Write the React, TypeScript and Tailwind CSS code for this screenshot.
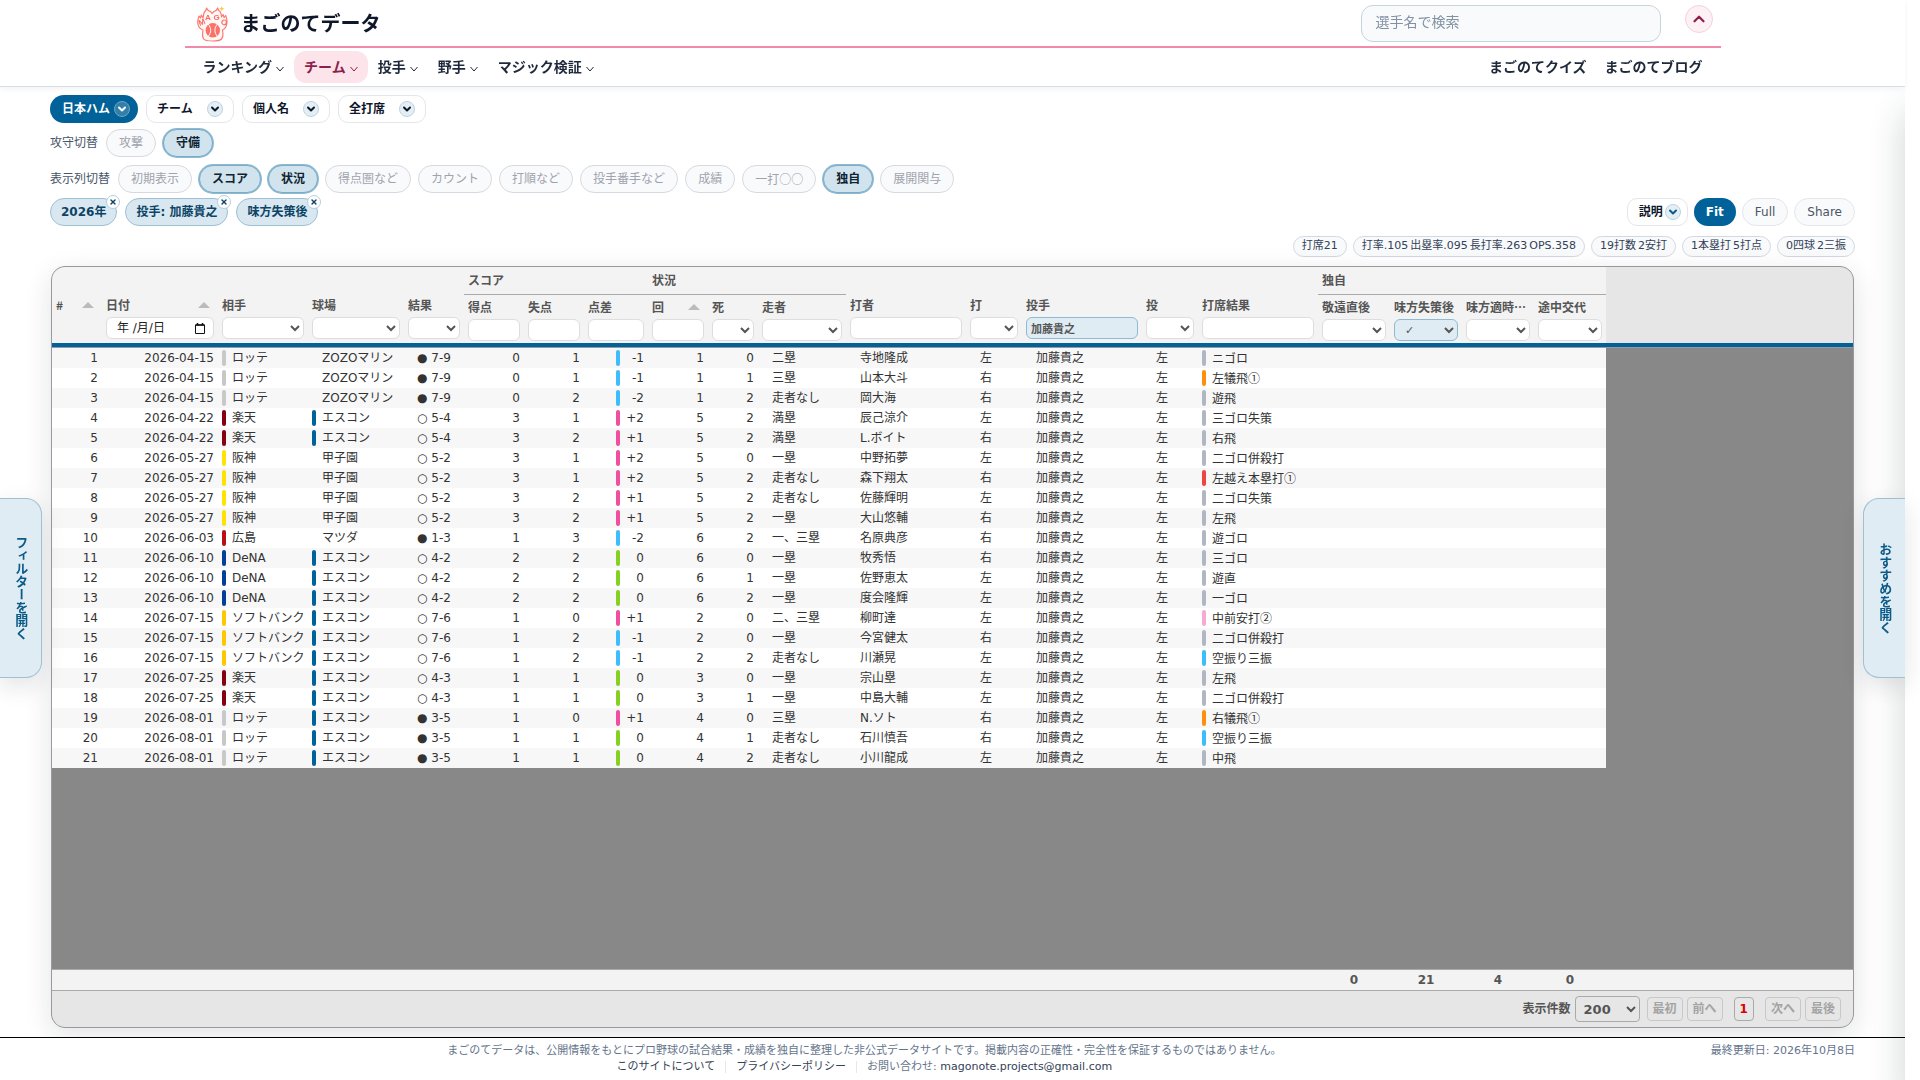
import type { ReactNode } from "react";
import { ChevronDown, ChevronUp, X } from "lucide-react";

interface AtBat {
  date: string;
  team: string;
  park: string;
  win: boolean;
  score: string;
  own: number;
  opp: number;
  inning: number;
  outs: number;
  runner: string;
  batter: string;
  bats: string;
  result: string;
  kind: string;
}

const teamColors: Record<string, string> = {
  ロッテ: "bg-[#c8c8c8]",
  楽天: "bg-[#85010f]",
  阪神: "bg-[#ffe201]",
  広島: "bg-[#b80f14]",
  DeNA: "bg-[#024098]",
  ソフトバンク: "bg-[#ffc702]",
};

const kindColors: Record<string, string> = {
  out: "bg-[#b0b6c2]",
  sac: "bg-[#ff8f0f]",
  hr: "bg-[#ef4444]",
  hit: "bg-[#f9a8d4]",
  k: "bg-[#3dbdfb]",
};

const row = (
  date: string, team: string, park: string, win: boolean, score: string, own: number, opp: number,
  inning: number, outs: number, runner: string, batter: string, bats: string, result: string, kind = "out",
): AtBat => ({ date, team, park, win, score, own, opp, inning, outs, runner, batter, bats, result, kind });

const atBats: AtBat[] = [
  row("2026-04-15", "ロッテ", "ZOZOマリン", false, "7-9", 0, 1, 1, 0, "二塁", "寺地隆成", "左", "ニゴロ"),
  row("2026-04-15", "ロッテ", "ZOZOマリン", false, "7-9", 0, 1, 1, 1, "三塁", "山本大斗", "右", "左犠飛①", "sac"),
  row("2026-04-15", "ロッテ", "ZOZOマリン", false, "7-9", 0, 2, 1, 2, "走者なし", "岡大海", "右", "遊飛"),
  row("2026-04-22", "楽天", "エスコン", true, "5-4", 3, 1, 5, 2, "満塁", "辰己涼介", "左", "三ゴロ失策"),
  row("2026-04-22", "楽天", "エスコン", true, "5-4", 3, 2, 5, 2, "満塁", "L.ボイト", "右", "右飛"),
  row("2026-05-27", "阪神", "甲子園", true, "5-2", 3, 1, 5, 0, "一塁", "中野拓夢", "左", "二ゴロ併殺打"),
  row("2026-05-27", "阪神", "甲子園", true, "5-2", 3, 1, 5, 2, "走者なし", "森下翔太", "右", "左越え本塁打①", "hr"),
  row("2026-05-27", "阪神", "甲子園", true, "5-2", 3, 2, 5, 2, "走者なし", "佐藤輝明", "左", "二ゴロ失策"),
  row("2026-05-27", "阪神", "甲子園", true, "5-2", 3, 2, 5, 2, "一塁", "大山悠輔", "右", "左飛"),
  row("2026-06-03", "広島", "マツダ", false, "1-3", 1, 3, 6, 2, "一、三塁", "名原典彦", "右", "遊ゴロ"),
  row("2026-06-10", "DeNA", "エスコン", true, "4-2", 2, 2, 6, 0, "一塁", "牧秀悟", "右", "三ゴロ"),
  row("2026-06-10", "DeNA", "エスコン", true, "4-2", 2, 2, 6, 1, "一塁", "佐野恵太", "左", "遊直"),
  row("2026-06-10", "DeNA", "エスコン", true, "4-2", 2, 2, 6, 2, "一塁", "度会隆輝", "左", "一ゴロ"),
  row("2026-07-15", "ソフトバンク", "エスコン", true, "7-6", 1, 0, 2, 0, "二、三塁", "柳町達", "左", "中前安打②", "hit"),
  row("2026-07-15", "ソフトバンク", "エスコン", true, "7-6", 1, 2, 2, 0, "一塁", "今宮健太", "右", "二ゴロ併殺打"),
  row("2026-07-15", "ソフトバンク", "エスコン", true, "7-6", 1, 2, 2, 2, "走者なし", "川瀬晃", "左", "空振り三振", "k"),
  row("2026-07-25", "楽天", "エスコン", true, "4-3", 1, 1, 3, 0, "一塁", "宗山塁", "左", "左飛"),
  row("2026-07-25", "楽天", "エスコン", true, "4-3", 1, 1, 3, 1, "一塁", "中島大輔", "左", "二ゴロ併殺打"),
  row("2026-08-01", "ロッテ", "エスコン", false, "3-5", 1, 0, 4, 0, "三塁", "N.ソト", "右", "右犠飛①", "sac"),
  row("2026-08-01", "ロッテ", "エスコン", false, "3-5", 1, 1, 4, 1, "走者なし", "石川慎吾", "右", "空振り三振", "k"),
  row("2026-08-01", "ロッテ", "エスコン", false, "3-5", 1, 1, 4, 2, "走者なし", "小川龍成", "左", "中飛"),
];

const columnToggles = [
  { label: "初期表示", on: false },
  { label: "スコア", on: true },
  { label: "状況", on: true },
  { label: "得点圏など", on: false },
  { label: "カウント", on: false },
  { label: "打順など", on: false },
  { label: "投手番手など", on: false },
  { label: "成績", on: false },
  { label: "一打○○", on: false },
  { label: "独自", on: true },
  { label: "展開関与", on: false },
];

const stats = [
  ["打席21"],
  ["打率.105", "出塁率.095", "長打率.263", "OPS.358"],
  ["19打数", "2安打"],
  ["1本塁打", "5打点"],
  ["0四球", "2三振"],
];

function Logo() {
  return (
    <svg width="36" height="36" viewBox="0 0 36 36" fill="none" stroke="#fb7a72" strokeLinecap="round" strokeLinejoin="round">
      <path
        d="M8 24c-3-1-5-4-5.300-7.500-.2-2.500.6-4 1.300-6.500l1.500 2 .8-3 1.800 3C8.500 7 9.300 5.500 10.800 4.500l.8-2.500 1.400 2.300c2 .3 3.400 1.500 4.200 3.200.8-1.700 2.200-2.900 4.200-3.200L22.600 2l1.200 2.500c1.700 1 2.500 2.500 2.700 6.500l1.600-2.500 1 3 1.600-2c.8 2.500 1.600 4.200 1.300 7-.3 3.500-2 6.500-4.500 7.500.8 4 .8 7-1 9-1.500 1.800-4 2-9 2s-7.500-.2-8.800-2C7.200 31 7.300 28 8 24z"
        strokeWidth="1.200"
        fill="#fff7f6"
      />
      <circle cx="17.800" cy="24.300" r="7.200" fill="#fb7268" stroke="none" />
      <path d="M13.500 18.500c3 3.500 3 8 0 11.600M22.100 18.500c-3 3.500-3 8 0 11.600" stroke="#fff" strokeWidth="1" />
      <g fill="#fb6a60" stroke="none" fontSize="8" fontWeight="700" textAnchor="middle" fontFamily="Liberation Sans, sans-serif">
        <text x="7" y="19" transform="rotate(-22 7 17)">M</text>
        <text x="13" y="13.500">A</text>
        <text x="21.500" y="13.500">G</text>
        <text x="29" y="19" transform="rotate(22 29 17)">O</text>
      </g>
      <path d="M26.800 0l.8 2 2 .8-2 .8-.8 2-.8-2-2-.8 2-.8z" fill="#fbc94a" stroke="none" />
    </svg>
  );
}

function NavItem({ label, active }: { label: string; active?: boolean }) {
  return (
    <a
      href="#"
      className={`flex h-8 items-center gap-1 rounded-xl px-2.5 text-sm font-bold ${active ? "bg-[#fce4ea] text-[#8e1f4b]" : "text-[#1e293b]"}`}
    >
      {label}
      <svg width="8" height="6" viewBox="0 0 8 6" fill="none" stroke="currentColor" className="mt-1">
        <path d="M.5 1L4 5l3.500-4" />
      </svg>
    </a>
  );
}

function MenuButton({ label, primary }: { label: string; primary?: boolean }) {
  return (
    <button
      className={`flex h-7 w-[88px] items-center justify-between text-xs font-bold ${
        primary
          ? "rounded-full bg-[#006298] pr-2 pl-3 text-white"
          : "rounded-[10px] border border-[#e4e6ea] bg-white px-2.5 text-[#0f172a]"
      }`}
    >
      {label}
      <span
        className={`flex size-4 items-center justify-center rounded-full border ${
          primary ? "border-[#6fa5c4] bg-[#337fab]" : "border-[#bcd3e0] bg-[#e3eef5]"
        }`}
      >
        <ChevronDown size={12} strokeWidth={4} />
      </span>
    </button>
  );
}

function Toggle({ label, on }: { label: string; on: boolean }) {
  return (
    <button
      className={`h-7 rounded-full border px-3 text-xs ${
        on
          ? "border-[#79adc9] bg-[#d1e3ed] font-bold text-[#0f2433] ring-1 ring-[#8dbad2]"
          : "border-[#d6d9df] bg-[#f9fafc] text-[#9fa3ad]"
      }`}
    >
      {label.includes("○") ? <span className="font-['Noto_Sans_CJK_JP']">{label}</span> : label}
    </button>
  );
}

function FilterChip({ label }: { label: string }) {
  return (
    <span className="relative flex h-7 items-center rounded-full border border-[#9cc0d5] bg-[#d9e8f0] px-2.5 text-xs font-bold text-[#0b4466]">
      {label}
      <button
        aria-label={`${label}を解除`}
        className="absolute -top-1 -right-1 flex size-3.5 items-center justify-center rounded-full border border-[#b4cfdf] bg-white text-[#0b4466]"
      >
        <X size={8} strokeWidth={4} />
      </button>
    </span>
  );
}

function Columns() {
  return (
    <colgroup>
      <col className="w-[50px]" />
      <col className="w-[116px]" />
      <col className="w-[90px]" />
      <col className="w-[96px]" />
      <col className="w-[60px]" />
      <col className="w-[60px]" />
      <col className="w-[60px]" />
      <col className="w-[64px]" />
      <col className="w-[60px]" />
      <col className="w-[50px]" />
      <col className="w-[88px]" />
      <col className="w-[120px]" />
      <col className="w-[56px]" />
      <col className="w-[120px]" />
      <col className="w-[56px]" />
      <col className="w-[120px]" />
      <col className="w-[72px]" />
      <col className="w-[72px]" />
      <col className="w-[72px]" />
      <col className="w-[72px]" />
      <col />
    </colgroup>
  );
}

const fieldClass = "block h-[22px] w-full rounded-md border text-[11px]";

interface HeadProps {
  label: string;
  filter?: "text" | "select" | "date";
  value?: string;
  sort?: boolean;
  grouped?: boolean;
}

function Head({ label, filter, value, sort, grouped }: HeadProps) {
  const tone = value ? "border-[#8fbad3] bg-[#dfecf4]" : "border-[#dddddd] bg-white";
  return (
    <th
      rowSpan={grouped ? 1 : 2}
      className={`bg-[#f3f3f3] px-1 text-left align-bottom font-bold ${grouped ? "pb-0.5" : "pb-1"}`}
    >
      <div className={`flex h-4 items-center justify-between leading-4 ${filter ? "mb-1" : "mb-[26px]"}`}>
        <span className="font-['Noto_Sans_CJK_JP'] whitespace-nowrap">{label}</span>
        {sort && <span className="mr-1 border-x-6 border-b-6 border-x-transparent border-b-[#bbbbbb]" />}
      </div>
      {filter === "text" && (
        <input aria-label={label} defaultValue={value} className={`${fieldClass} ${tone} px-1 font-bold`} />
      )}
      {filter === "select" && (
        <select aria-label={label} className={`${fieldClass} ${tone} pl-1.5`}>
          <option>{value ?? ""}</option>
        </select>
      )}
      {filter === "date" && (
        <div className={`${fieldClass} ${tone} flex! items-center pr-2 pl-2.5`}>
          <input aria-label={label} defaultValue="年 /月/日" className="w-0 flex-1 text-xs font-normal text-[#222222]" />
          <svg width="10" height="11" viewBox="0 0 10 11" fill="none" stroke="#111111">
            <path d="M.5 2h9v8.500h-9z" />
            <path d="M.5 2h9M2.500 0v2M7.500 0v2" strokeWidth="1.500" />
          </svg>
        </div>
      )}
    </th>
  );
}

function GroupHead({ label, span }: { label: string; span: number }) {
  return (
    <th colSpan={span} className="h-7 border-b border-[#aaaaaa] bg-[#f3f3f3] px-1 text-left font-bold">
      {label}
    </th>
  );
}

function Barred({ color, children }: { color?: string; children: ReactNode }) {
  return (
    <div className="flex items-center gap-1.5">
      <span className={`h-4 w-1 shrink-0 rounded-sm ${color ?? ""}`} />
      {children}
    </div>
  );
}

function AtBatRow({ index, data }: { index: number; data: AtBat }) {
  const diff = data.own - data.opp;
  const diffColor = diff > 0 ? "bg-[#f04f9f]" : diff < 0 ? "bg-[#3dbdfb]" : "bg-[#84d121]";
  return (
    <tr className="h-5 odd:bg-[#f7f7f7] even:bg-white">
      <td className="px-1 text-right">{index}</td>
      <td className="px-1 text-right">{data.date}</td>
      <td className="px-1"><Barred color={teamColors[data.team]}>{data.team}</Barred></td>
      <td className="px-1"><Barred color={data.park === "エスコン" ? "bg-[#00629b]" : undefined}>{data.park}</Barred></td>
      <td className="px-1 text-center">
        {data.win ? "○" : "●"} {data.score}
      </td>
      <td className="px-1 text-right">{data.own}</td>
      <td className="px-1 text-right">{data.opp}</td>
      <td className="px-1">
        <div className="ml-auto flex w-7 items-center justify-between">
          <span className={`h-4 w-1 rounded-sm ${diffColor}`} />
          {diff > 0 ? `+${diff}` : diff}
        </div>
      </td>
      <td className="px-1 text-right">{data.inning}</td>
      <td className="px-1 text-right">{data.outs}</td>
      <td className="pl-3.5">{data.runner}</td>
      <td className="pl-3.5">{data.batter}</td>
      <td className="pl-3.5">{data.bats}</td>
      <td className="pl-3.5">加藤貴之</td>
      <td className="pl-3.5">左</td>
      <td className="px-1 font-['Noto_Sans_CJK_JP']"><Barred color={kindColors[data.kind]}>{data.result}</Barred></td>
      <td />
      <td />
      <td />
      <td />
      <td className="bg-[#888888]" />
    </tr>
  );
}

function PageButton({ label }: { label: string }) {
  return (
    <button disabled className="h-6 rounded border border-[#c8c8c8] px-[5px] font-bold text-[#a3a3a3]">
      {label}
    </button>
  );
}

export default function App() {
  return (
    <div
      lang="ja"
      className="mr-[15px] flex min-h-screen flex-col bg-white font-['DejaVu_Sans','Noto_Sans_CJK_JP',sans-serif] text-xs text-[#333333]"
    >
      {/* Site header */}
      <header className="relative z-10 border-b border-[#d5dee5] bg-white shadow-[0_2px_6px_rgba(15,23,42,0.05)]">
        <div className="mx-auto max-w-[1536px]">
          <div className="flex h-12 items-center border-b-2 border-[#f28aa9] pr-2 pl-2.5">
            <a href="#" className="flex items-center gap-2.5 pt-0.5 text-xl font-bold text-[#0f172a]">
              <Logo />
              まごのてデータ
            </a>
            <input
              type="search"
              aria-label="選手名で検索"
              placeholder="選手名で検索"
              className="ml-auto h-[37px] w-[300px] rounded-xl border border-[#c5d5de] bg-[#f8fafc] px-3.5 pb-0.5 text-sm placeholder:text-[#8291a3]"
            />
            <button
              aria-label="閉じる"
              className="mt-[5px] ml-6 flex size-7 items-center justify-center self-start rounded-full border border-[#f0d3dc] bg-[#fdf1f5] text-[#8e1f4b]"
            >
              <ChevronUp size={18} strokeWidth={3} />
            </button>
          </div>
          <nav className="flex h-[38px] items-center px-2">
            <NavItem label="ランキング" />
            <NavItem label="チーム" active />
            <NavItem label="投手" />
            <NavItem label="野手" />
            <NavItem label="マジック検証" />
            <div className="ml-auto flex gap-[18px] px-2.5 text-sm font-bold text-[#1e293b]">
              <a href="#">まごのてクイズ</a>
              <a href="#">まごのてブログ</a>
            </div>
          </nav>
        </div>
      </header>

      <main className="flex flex-1 flex-col px-[50px] pt-2">
        <div className="flex gap-2">
          <MenuButton label="日本ハム" primary />
          <MenuButton label="チーム" />
          <MenuButton label="個人名" />
          <MenuButton label="全打席" />
        </div>
        <div className="mt-1.5 flex items-center gap-[7px] text-[#475569]">
          <span className="mr-px">攻守切替</span>
          <Toggle label="攻撃" on={false} />
          <Toggle label="守備" on />
        </div>
        <div className="mt-2 flex items-center gap-[7px] text-[#475569]">
          <span className="mr-px">表示列切替</span>
          {columnToggles.map((t) => (
            <Toggle key={t.label} label={t.label} on={t.on} />
          ))}
        </div>
        <div className="mt-[5px] flex items-center gap-1.5">
          <div className="mr-auto flex gap-2">
            <FilterChip label="2026年" />
            <FilterChip label="投手: 加藤貴之" />
            <FilterChip label="味方失策後" />
          </div>
          <button className="flex h-7 items-center gap-0.5 rounded-[10px] border border-[#e4e6ea] bg-white pr-1.5 pl-[11px] font-bold text-[#0f172a]">
            説明
            <span className="flex size-4 items-center justify-center rounded-full border border-[#bcd3e0] bg-[#e3eef5] text-[#0b5a88]">
              <ChevronDown size={12} strokeWidth={4} />
            </span>
          </button>
          <button className="h-7 rounded-full bg-[#006298] px-3 font-bold text-white">Fit</button>
          <button className="h-7 rounded-full border border-[#e4e6ea] bg-[#f9fafc] px-3 text-[#4b5563]">Full</button>
          <button className="h-7 rounded-full border border-[#e4e6ea] bg-[#f9fafc] px-3 text-[#4b5563]">Share</button>
        </div>
        <div className="mt-2.5 flex justify-end gap-1.5">
          {stats.map((group) => (
            <span
              key={group[0]}
              className="flex h-[21px] items-center gap-0.5 rounded-full border border-[#d3d8e0] bg-[#f8fafc] px-2 text-[11px] text-[#334155]"
            >
              {group.map((s) => (
                <span key={s}>{s}</span>
              ))}
            </span>
          ))}
        </div>

        {/* Data table */}
        <section className="mx-px mt-[9px] mb-[9px] flex flex-1 flex-col overflow-hidden rounded-[14px] border border-[#999999] bg-[#888888] shadow-[0_8px_28px_rgba(15,23,42,0.12)]">
          <div className="flex-1">
            <table className="w-full table-fixed border-separate border-spacing-0 leading-5 whitespace-nowrap">
              <Columns />
              <thead className="text-[#555555]">
                <tr className="h-7">
                  <Head label="#" sort />
                  <Head label="日付" filter="date" sort />
                  <Head label="相手" filter="select" />
                  <Head label="球場" filter="select" />
                  <Head label="結果" filter="select" />
                  <GroupHead label="スコア" span={3} />
                  <GroupHead label="状況" span={3} />
                  <Head label="打者" filter="text" />
                  <Head label="打" filter="select" />
                  <Head label="投手" filter="text" value="加藤貴之" />
                  <Head label="投" filter="select" />
                  <Head label="打席結果" filter="text" />
                  <GroupHead label="独自" span={4} />
                  <td rowSpan={2} className="bg-[#e6e6e6]" />
                </tr>
                <tr className="h-12">
                  <Head label="得点" filter="text" grouped />
                  <Head label="失点" filter="text" grouped />
                  <Head label="点差" filter="text" grouped />
                  <Head label="回" filter="text" sort grouped />
                  <Head label="死" filter="select" grouped />
                  <Head label="走者" filter="select" grouped />
                  <Head label="敬遠直後" filter="select" grouped />
                  <Head label="味方失策後" filter="select" value="✓" grouped />
                  <Head label="味方適時…" filter="select" grouped />
                  <Head label="途中交代" filter="select" grouped />
                </tr>
                <tr>
                  <td colSpan={21} className="h-[5px] border-b border-[#999999] bg-[#006298]" />
                </tr>
              </thead>
              <tbody>
                {atBats.map((data, i) => (
                  <AtBatRow key={i} index={i + 1} data={data} />
                ))}
              </tbody>
            </table>
          </div>

          <table className="w-full table-fixed border-separate border-spacing-0 border-t border-[#aaaaaa] bg-[#f3f3f3] font-bold text-[#555555]">
            <Columns />
            <tbody>
              <tr className="h-5 text-center">
                <td colSpan={16} />
                <td>0</td>
                <td>21</td>
                <td>4</td>
                <td>0</td>
                <td />
              </tr>
            </tbody>
          </table>

          <div className="flex h-[37px] items-center justify-end gap-1 border-t border-[#aaaaaa] bg-[#e6e6e6] pr-3 font-bold text-[#555555]">
            <label htmlFor="page-size">表示件数</label>
            <select id="page-size" className="mr-[3px] h-[26px] w-[65px] rounded border border-[#aaaaaa] pl-1 text-[13px]">
              <option>200</option>
            </select>
            <PageButton label="最初" />
            <PageButton label="前へ" />
            <button className="mx-[7px] h-6 rounded border border-[#aaaaaa] px-[5px] font-bold text-[#dd0000]">1</button>
            <PageButton label="次へ" />
            <PageButton label="最後" />
          </div>
        </section>
      </main>

      <footer className="flex gap-8 border-t border-black bg-white px-[50px] py-[5px] text-[11px] leading-4 text-[#64748b]">
        <div className="flex-1 text-center">
          <p>
            まごのてデータは、公開情報をもとにプロ野球の試合結果・成績を独自に整理した非公式データサイトです。掲載内容の正確性・完全性を保証するものではありません。
          </p>
          <p className="flex items-center justify-center gap-2.5">
            <a href="#" className="text-[#334155]">このサイトについて</a>
            <span className="h-3 w-px bg-[#e2e8f0]" />
            <a href="#" className="text-[#334155]">プライバシーポリシー</a>
            <span className="h-3 w-px bg-[#e2e8f0]" />
            <span>
              お問い合わせ: <a href="#" className="text-[#334155]">magonote.projects@gmail.com</a>
            </span>
          </p>
        </div>
        <p>最終更新日: 2026年10月8日</p>
      </footer>

      {/* Side drawers */}
      <div className="pointer-events-none fixed top-[88px] right-[15px] bottom-0 w-12 overflow-hidden">
        <div className="mt-6 ml-12 h-full w-12 shadow-[0_0_36px_rgba(15,42,42,0.2)]" />
      </div>
      <div className="pointer-events-none fixed inset-y-0 left-0 flex items-center pt-24">
        <button className="pointer-events-auto flex h-[180px] w-[42px] items-center justify-center rounded-r-2xl border border-l-0 border-[#a1bfd3] bg-[#dfecf4] text-[13px] font-bold text-[#0b5a88] shadow-[0_8px_24px_rgba(15,23,42,0.12)] [writing-mode:vertical-rl]">
          フィルターを開く
        </button>
      </div>
      <div className="pointer-events-none fixed inset-y-0 right-[15px] flex items-center pt-24">
        <button className="pointer-events-auto flex h-[180px] w-[42px] items-center justify-center rounded-l-2xl border border-r-0 border-[#a1bfd3] bg-[#dfecf4] text-[13px] font-bold text-[#0b5a88] shadow-[0_8px_24px_rgba(15,23,42,0.12)] [writing-mode:vertical-rl]">
          おすすめを開く
        </button>
      </div>
    </div>
  );
}
